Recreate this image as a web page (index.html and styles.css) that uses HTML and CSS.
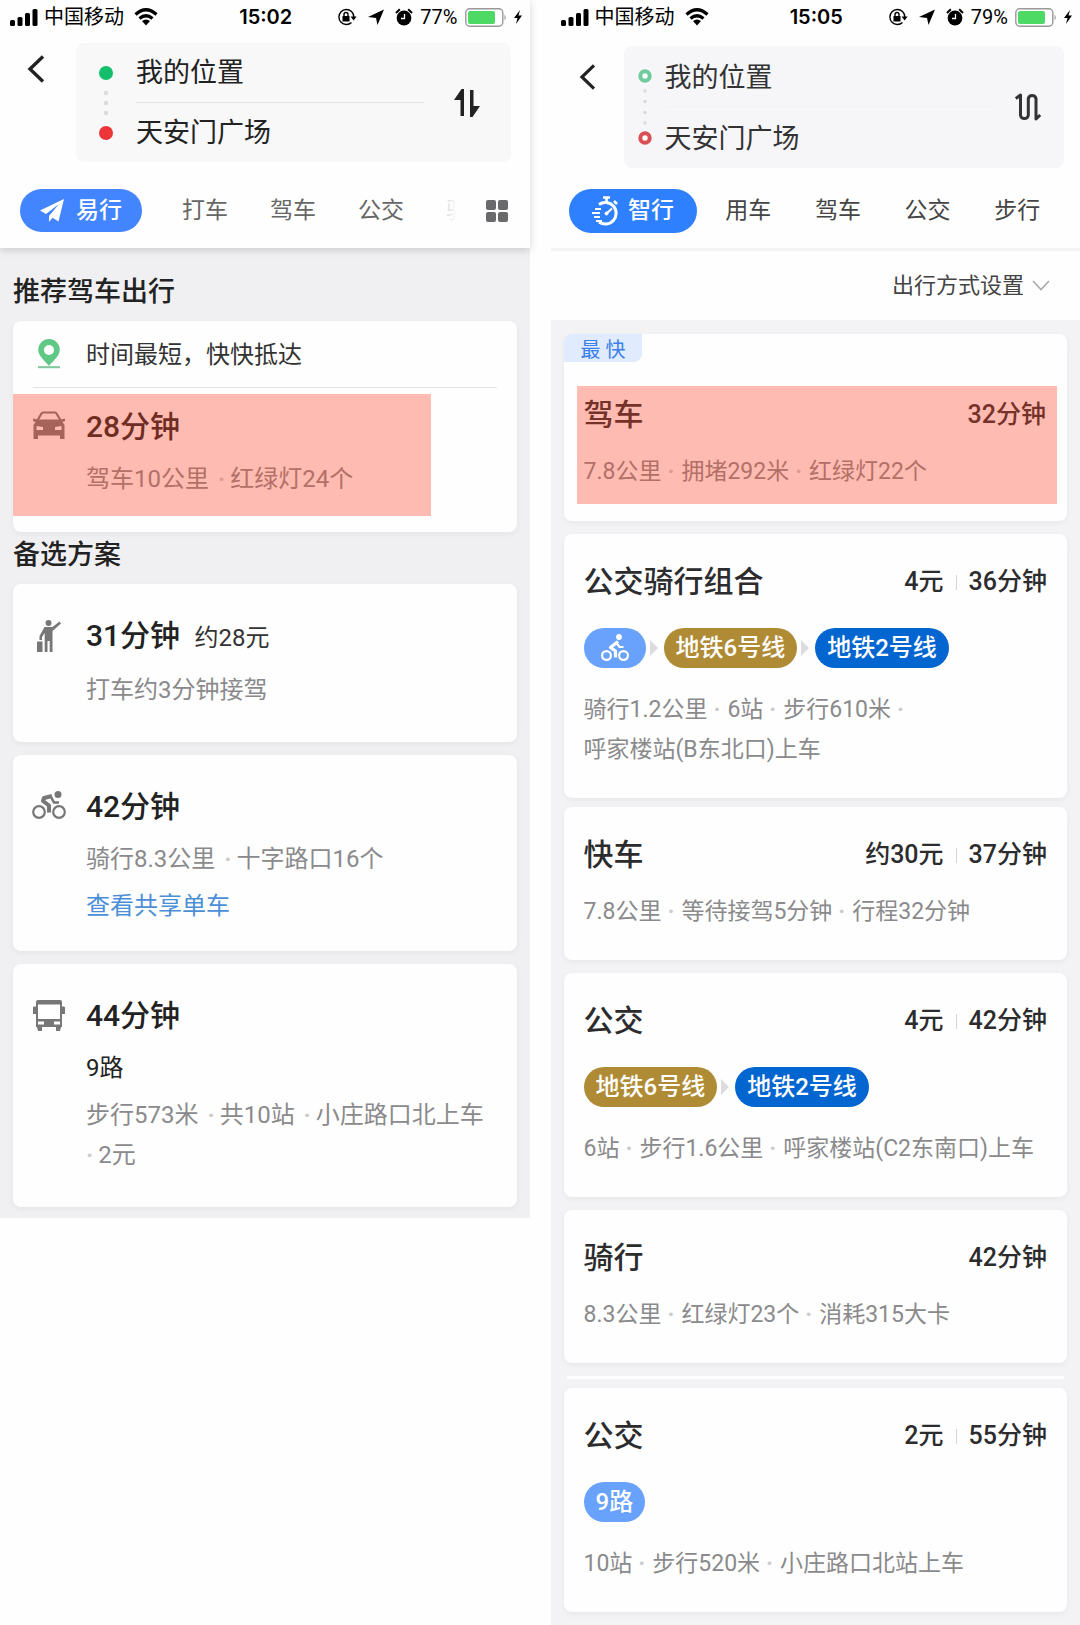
FILE: index.html
```html
<!DOCTYPE html>
<html lang="zh-CN">
<head>
  <meta charset="UTF-8" />
  <meta name="viewport" content="width=device-width, initial-scale=1.0" />
  <title>出行路线</title>
  <link rel="stylesheet" href="styles.css">
</head>
<body>
  <!-- shared icons -->
  <svg class="defs" aria-hidden="true">
    <symbol id="signal" viewBox="0 0 28 18">
      <rect x="0" y="12" width="5" height="6" rx="1.5"/><rect x="7.5" y="9" width="5" height="9" rx="1.5"/>
      <rect x="15" y="5" width="5" height="13" rx="1.5"/><rect x="22.500" y="1" width="5" height="17" rx="1.5"/>
    </symbol>
    <symbol id="wifi" viewBox="0 0 24 18">
      <path d="M1.500 6.500Q12-3 22.500 6.500M5.500 10.500Q12 5 18.500 10.500" fill="none" stroke="#000" stroke-width="3.200"/>
      <path d="M8 13Q12 10 16 13L12 17.500Z"/>
    </symbol>
    <symbol id="lock" viewBox="0 0 20 18">
      <path d="M14.500 3.500A7.500 7.500 0 1 0 14.500 14.500M14.500 3.500A7.500 7.500 0 0 1 16.800 9" fill="none" stroke="#000" stroke-width="1.400"/>
      <path d="M13.600 8.500h6l-3 4zM5.500 8h7v5.500h-7z"/>
      <path d="M7 8V6.500a2 2 0 0 1 4 0V8" fill="none" stroke="#000" stroke-width="1.400"/>
    </symbol>
    <symbol id="locate" viewBox="0 0 16 16"><path d="M16 0.500L9.500 16L8 9L0 8Z"/></symbol>
    <symbol id="alarm" viewBox="0 0 18 18">
      <circle cx="9" cy="10" r="7.400"/>
      <path d="M1 5L4.800 1.300M17 5L13.200 1.300" stroke="#000" stroke-width="2"/>
      <path d="M9.500 6V10.500H6" fill="none" stroke="#fff" stroke-width="1.300"/>
    </symbol>
    <symbol id="battery" viewBox="0 0 42 19">
      <rect x=".8" y=".8" width="37" height="17.400" rx="4" fill="#fff" stroke="#999" stroke-width="1.400"/>
      <rect x="3" y="3" width="27" height="13" rx="2" fill="#4cd964"/>
      <path d="M39.500 6.500Q42 9.500 39.500 12.500Z" fill="#999"/>
    </symbol>
    <symbol id="bolt" viewBox="0 0 8 14"><path d="M6 0L0 8H3.500L2 14L8 5.500H4.500Z"/></symbol>
    <symbol id="back" viewBox="0 0 18 28"><path d="M16 1.500L3 14L16 26.500" fill="none" stroke="#222" stroke-width="3.400"/></symbol>
    <symbol id="rider" viewBox="0 0 28 28">
      <g fill="none" stroke="#fff" stroke-width="2.200">
        <circle cx="5.500" cy="21.500" r="4.400"/><circle cx="22.500" cy="21.500" r="4.400"/>
        <path d="M17 7.500L9.500 13.500L14.500 17V23.500" stroke-width="3.200" stroke-linejoin="round"/>
        <path d="M15.500 9L18.500 13H22.500"/>
      </g>
      <circle cx="18" cy="3" r="2.900" fill="#fff"/>
    </symbol>
  </svg>

  <main class="compare">
    <section class="phone phone-a">
      <header class="top">
        <div class="status">
          <div class="status-left">
            <svg width="28" height="18"><use href="#signal"/></svg>
            <span>中国移动</span>
            <svg class="wifi" width="24" height="18"><use href="#wifi"/></svg>
          </div>
          <time>15:02</time>
          <div class="status-right">
            <svg width="20" height="18"><use href="#lock"/></svg>
            <svg width="16" height="16"><use href="#locate"/></svg>
            <svg width="18" height="18"><use href="#alarm"/></svg>
            <span>77%</span>
            <svg width="42" height="19"><use href="#battery"/></svg>
            <svg width="8" height="14"><use href="#bolt"/></svg>
          </div>
        </div>
        <div class="search">
          <button class="back" type="button" aria-label="返回"><svg width="18" height="28"><use href="#back"/></svg></button>
          <form class="route">
            <svg class="marks" width="14" height="74" viewBox="0 0 14 74">
              <circle cx="7" cy="7" r="7" fill="#13bf6c"/>
              <g fill="#dcdcde"><circle cx="7" cy="27" r="2.300"/><circle cx="7" cy="37" r="2.300"/><circle cx="7" cy="47" r="2.300"/></g>
              <circle cx="7" cy="67" r="7" fill="#eb3539"/>
            </svg>
            <div class="fields">
              <input type="text" aria-label="起点" value="我的位置">
              <input type="text" aria-label="终点" value="天安门广场">
            </div>
            <button class="swap" type="button" aria-label="交换起终点">
              <svg width="26" height="28" viewBox="0 0 26 28"><path d="M7.500 0H10V27H6.500V11H0ZM16 1H19.500V17H26L18.500 28H16Z" fill="#222"/></svg>
            </button>
          </form>
        </div>
        <nav class="tabs">
          <div class="tab-scroll">
            <button class="tab active" type="button">
              <svg width="24" height="23" viewBox="0 0 24 23"><path d="M24 0L0 11.500L6 15L19 5L9 17V23L12.500 18.800L18.500 22.500Z" fill="#fff"/></svg>
              易行
            </button>
            <button class="tab" type="button">打车</button>
            <button class="tab" type="button">驾车</button>
            <button class="tab" type="button">公交</button>
            <button class="tab" type="button">骑行</button>
          </div>
          <button class="more" type="button" aria-label="全部方式">
            <svg width="22" height="22" viewBox="0 0 22 22" fill="#6a696b"><rect width="10" height="10" rx="2"/><rect x="12" width="10" height="10" rx="2"/><rect y="12" width="10" height="10" rx="2"/><rect x="12" y="12" width="10" height="10" rx="2"/></svg>
          </button>
        </nav>
      </header>

      <div class="list">
        <h2>推荐驾车出行</h2>
        <article class="card best">
          <div class="reason">
            <svg width="32" height="30" viewBox="0 0 32 30">
              <path d="M16 0A10.800 10.800 0 0 0 5.200 10.800C5.200 17 12 22 16 27C20 22 26.800 17 26.800 10.800A10.800 10.800 0 0 0 16 0Z" fill="#60c886"/>
              <circle cx="16" cy="11" r="5" fill="#fff"/><path d="M5 28.200H27" stroke="#7ec79a" stroke-width="2"/>
            </svg>
            <span>时间最短，快快抵达</span>
          </div>
          <div class="trip picked">
            <svg width="32" height="30" viewBox="0 0 32 30">
              <path d="M4 10L8.500 2.500Q9 1.500 10 1.500H22Q23 1.500 23.500 2.500L28 10" fill="none" stroke="#777" stroke-width="2.200"/>
              <path d="M0 7.500L4 8.500L28 8.500L32 7.500V10L29.500 11L31.500 14V28H27V24.500H5V28H.5V14L2.500 11L0 10Z" fill="#777"/>
              <path d="M3.500 15L10 16V19H3.500ZM28.500 15L22 16V19H28.500Z" fill="#fff"/>
            </svg>
            <div class="info">
              <h3>28分钟</h3>
              <p><span>驾车10公里</span> <i>·</i>红绿灯24个</p>
            </div>
          </div>
        </article>

        <h2 class="other">备选方案</h2>
        <article class="card trip">
          <svg width="32" height="32" viewBox="0 0 32 32" fill="#777">
            <circle cx="15.500" cy="3" r="3"/>
            <path d="M11.500 7H19.500L26.500 1.500L28 3.500L19.500 11V32H16.700V21H14.500V32H11.700V13L9 17V20H6.500V16Z"/>
            <path d="M4 21.500H9.500V32H4Z"/>
          </svg>
          <div class="info">
            <h3>31分钟 <small>约28元</small></h3>
            <p>打车约3分钟接驾</p>
          </div>
        </article>

        <article class="card trip">
          <svg width="34" height="28" viewBox="0 0 34 28">
            <g fill="none" stroke="#777">
              <circle cx="7" cy="21" r="5.800" stroke-width="2.200"/><circle cx="27" cy="21" r="5.800" stroke-width="2.200"/>
              <path d="M20 5L12 7L11 10L17 14.500V21.500" stroke-width="4" stroke-linejoin="round"/>
              <path d="M19 6L22 11.500H27" stroke-width="2.600"/>
            </g>
            <circle cx="26" cy="3.500" r="3.500" fill="#777"/>
          </svg>
          <div class="info">
            <h3>42分钟</h3>
            <p><span>骑行8.3公里</span> <i>·</i>十字路口16个</p>
            <a class="bikes" href="#">查看共享单车</a>
          </div>
        </article>

        <article class="card trip">
          <svg width="32" height="31" viewBox="0 0 32 31">
            <path d="M5 0H27Q29 0 29 2V27H3V2Q3 0 5 0Z" fill="#777"/>
            <path d="M5 4.500H27V19H5ZM5 21.500H11V24.500H5ZM21 21.500H27V24.500H21Z" fill="#fff"/>
            <path d="M0 7.500Q0 6 3 6.500V14H0ZM32 7.500Q32 6 29 6.500V14H32ZM4 27H9V31H5ZM23 27H28L27 31H23Z" fill="#777"/>
          </svg>
          <div class="info">
            <h3>44分钟</h3>
            <p class="line-name">9路</p>
            <p><span>步行573米</span> <i>·</i><span>共10站</span> <i>·</i>小庄路口北上车<br><i>·</i>2元</p>
          </div>
        </article>
      </div>
    </section>

    <section class="phone phone-b">
      <header class="top">
        <div class="status">
          <div class="status-left">
            <svg width="28" height="18"><use href="#signal"/></svg>
            <span>中国移动</span>
            <svg class="wifi" width="24" height="18"><use href="#wifi"/></svg>
          </div>
          <time>15:05</time>
          <div class="status-right">
            <svg width="20" height="18"><use href="#lock"/></svg>
            <svg width="16" height="16"><use href="#locate"/></svg>
            <svg width="18" height="18"><use href="#alarm"/></svg>
            <span>79%</span>
            <svg width="42" height="19"><use href="#battery"/></svg>
            <svg width="8" height="14"><use href="#bolt"/></svg>
          </div>
        </div>
        <div class="search">
          <button class="back" type="button" aria-label="返回"><svg width="17" height="26"><use href="#back"/></svg></button>
          <form class="route">
            <svg class="marks" width="14" height="76" viewBox="0 0 14 76">
              <circle cx="7" cy="7" r="4.700" fill="#fff" stroke="#6fcb9b" stroke-width="4"/>
              <g fill="#d9d9dd"><circle cx="7" cy="22" r="1.700"/><circle cx="7" cy="32.500" r="1.700"/><circle cx="7" cy="43.500" r="1.700"/><circle cx="7" cy="54" r="1.700"/></g>
              <circle cx="7" cy="69" r="4.700" fill="#fff" stroke="#da4f55" stroke-width="4"/>
            </svg>
            <div class="fields">
              <input type="text" aria-label="起点" value="我的位置">
              <input type="text" aria-label="终点" value="天安门广场">
            </div>
            <button class="swap" type="button" aria-label="交换起终点">
              <svg width="26" height="28" viewBox="0 0 26 28"><path d="M.8 5.500L5.500 2V22.500A4 4 0 0 0 13.300 22.500V5.500A4 4 0 0 1 21 5.500V26L25.200 22" fill="none" stroke="#333" stroke-width="3" stroke-linejoin="round"/></svg>
            </button>
          </form>
        </div>
        <nav class="tabs">
          <button class="tab active" type="button">
            <svg width="29" height="30" viewBox="0 0 29 30" fill="none" stroke="#fff">
              <path d="M8 8.500A10.800 10.800 0 1 1 8 26" stroke-width="3"/>
              <path d="M12 1.500H19M15.500 1.500V6M23 5L26 8" stroke-width="2.600"/>
              <path d="M4 13H10M1 17H9M3 21H9M5 25H11" stroke-width="1.800"/>
              <path d="M15 18L21 12.500" stroke-width="2"/><circle cx="15.500" cy="17.500" r="1.500" fill="#fff"/>
            </svg>
            智行
          </button>
          <button class="tab" type="button">用车</button>
          <button class="tab" type="button">驾车</button>
          <button class="tab" type="button">公交</button>
          <button class="tab" type="button">步行</button>
        </nav>
      </header>

      <div class="filter">
        <button type="button">出行方式设置
          <svg width="18" height="11" viewBox="0 0 18 11"><path d="M1 1L9 9.500L17 1" fill="none" stroke="#aaa" stroke-width="1.600"/></svg>
        </button>
      </div>

      <div class="list">
        <article class="card fastest">
          <span class="badge">最 快</span>
          <div class="picked">
            <div class="head"><h3>驾车</h3><span>32分钟</span></div>
            <p>7.8公里<i>·</i>拥堵292米<i>·</i>红绿灯22个</p>
          </div>
        </article>

        <article class="card">
          <div class="head"><h3>公交骑行组合</h3><span class="price">4元</span><span>36分钟</span></div>
          <div class="lines">
            <span class="line bike"><svg width="28" height="28"><use href="#rider"/></svg></span>
            <span class="line metro6">地铁6号线</span>
            <span class="line metro2">地铁2号线</span>
          </div>
          <p>骑行1.2公里<i>·</i>6站<i>·</i>步行610米<i>·</i><br>呼家楼站(B东北口)上车</p>
        </article>

        <article class="card joined">
          <div class="head"><h3>快车</h3><span class="price">约30元</span><span>37分钟</span></div>
          <p>7.8公里<i>·</i>等待接驾5分钟<i>·</i>行程32分钟</p>
        </article>

        <article class="card">
          <div class="head"><h3>公交</h3><span class="price">4元</span><span>42分钟</span></div>
          <div class="lines">
            <span class="line metro6">地铁6号线</span>
            <span class="line metro2">地铁2号线</span>
          </div>
          <p>6站<i>·</i>步行1.6公里<i>·</i>呼家楼站(C2东南口)上车</p>
        </article>

        <article class="card">
          <div class="head"><h3>骑行</h3><span>42分钟</span></div>
          <p>8.3公里<i>·</i>红绿灯23个<i>·</i>消耗315大卡</p>
        </article>

        <hr class="rule">

        <article class="card joined">
          <div class="head"><h3>公交</h3><span class="price">2元</span><span>55分钟</span></div>
          <div class="lines"><span class="line bus">9路</span></div>
          <p>10站<i>·</i>步行520米<i>·</i>小庄路口北站上车</p>
        </article>
      </div>
    </section>
  </main>
</body>
</html>
```
FILE: styles.css
```css
* {
  box-sizing: border-box;
}
body {
  margin: 0;
  background: #fefefe;
  color: #222;
  font-family: Roboto, "Noto Sans CJK SC", sans-serif;
}
h2, h3, p {
  margin: 0;
  font-weight: 500;
}
button, input {
  font: inherit;
  color: inherit;
  background: none;
  border: none;
  padding: 0;
}
button {
  cursor: pointer;
}
svg {
  flex: none;
}
.defs {
  display: none;
}
.compare {
  display: flex;
  align-items: flex-start;
  gap: 21px;
}
.phone {
  flex: 1;
  min-width: 0;
}

/* status bar */
.status {
  display: grid;
  grid-template-columns: 1fr auto 1fr;
  align-items: center;
  height: 34px;
  padding: 0 8px 0 10px;
  font-size: 20px;
  line-height: 34px;
  color: #000;
}
.status time {
  font-family: Inter, sans-serif;
  font-weight: 600;
}
.status-left, .status-right {
  display: flex;
  align-items: center;
  gap: 7px;
}
.status-left {
  gap: 6px;
}
.status-right {
  justify-content: flex-end;
}
.status-right svg:nth-child(-n+2) {
  margin-right: 4px;
}
.wifi {
  margin-left: 4px;
}

/* header */
.top {
  position: relative;
  background: #fefefe;
}
.search {
  display: flex;
  align-items: flex-start;
}
.back {
  display: flex;
  align-items: center;
}
.route {
  flex: 1;
  display: flex;
  align-items: center;
  border-radius: 8px;
  font-size: 27px;
}
.fields {
  flex: 1;
  min-width: 0;
}
.fields input {
  display: block;
  width: 100%;
  height: 60px;
  padding-bottom: 4px;
}
.fields input:first-child {
  border-bottom: 1px solid #e4e4e6;
}
.swap {
  display: flex;
  justify-content: center;
}
.tabs {
  display: flex;
  font-size: 23px;
  line-height: 40px;
}
.tab.active {
  display: flex;
  align-items: center;
  justify-content: center;
  border-radius: 22px;
  color: #fff;
  font-weight: 500;
}

.phone-a .top {
  box-shadow: 0 2px 8px rgba(0, 0, 0, .16);
}
.phone-a .search {
  padding: 9px 19px 0 0;
}
.phone-a .back {
  width: 76px;
  height: 52px;
  padding-left: 27px;
}
.phone-a .route {
  background: #f8f8f9;
}
.phone-a .marks {
  margin: 0 23px 0 23px;
}
.phone-a .fields input:last-child {
  height: 59px;
}
.phone-a .swap {
  width: 87px;
}
.phone-a .tabs {
  padding: 27px 0 16px 20px;
  color: #666;
}
.tab-scroll {
  position: relative;
  flex: 1;
  min-width: 0;
  display: flex;
  overflow: hidden;
}
.tab-scroll::after {
  content: "";
  position: absolute;
  top: 0;
  right: 0;
  width: 32px;
  height: 100%;
  background: linear-gradient(to right, rgba(254, 254, 254, .3), #fefefe);
}
.phone-a .tab {
  flex: none;
  width: 88px;
}
.phone-a .tab.active {
  width: 122px;
  height: 43px;
  margin-right: 19px;
  gap: 12px;
  background: #4385ff;
}
.more {
  display: flex;
  align-items: center;
  justify-content: center;
  width: 73px;
  padding-left: 8px;
}

.phone-b .search {
  padding: 12px 16px 0 0;
}
.phone-b .back {
  width: 73px;
  height: 62px;
  padding-left: 28px;
}
.phone-b .route {
  background: #f6f6f9;
  color: #333;
}
.phone-b .marks {
  margin: 0 13px 0 14px;
}
.phone-b .fields input {
  height: 61px;
  padding-bottom: 2px;
}
.phone-b .fields input:first-child {
  border-color: #f2f1f5;
}
.phone-b .swap {
  width: 72px;
}
.phone-b .tabs {
  padding: 21px 18px 15px 18px;
  color: #444;
}
.phone-b .tab {
  flex: 1;
}
.phone-b .tab.active {
  flex: none;
  width: 128px;
  height: 44px;
  margin-right: 7px;
  gap: 8px;
  background: #2f80fe;
}
.filter {
  display: flex;
  justify-content: flex-end;
  height: 72px;
  padding-right: 30px;
  border-top: 3px solid #f3f2f5;
  color: #444;
  font-size: 22px;
  line-height: 40px;
}
.filter button {
  display: flex;
  align-items: center;
  gap: 8px;
}

/* result cards */
.card {
  margin-bottom: 13px;
  border-radius: 8px;
  background: #fefefe;
  box-shadow: 0 2px 6px rgba(0, 0, 0, .05);
}
.card h3 {
  font-size: 30px;
  line-height: 40px;
}
.card p {
  line-height: 40px;
  font-weight: 400;
  color: #8a8a8c;
}
.card i {
  font-style: normal;
  font-weight: 700;
  color: #ccc;
}
.picked {
  position: relative;
}
.picked::after {
  content: "";
  position: absolute;
  inset: 0;
  background: rgba(255, 63, 35, .35);
}

.phone-a .list {
  display: flow-root;
  padding: 24px 13px 0;
  background: #f0eff1;
}
.phone-a .card:last-child {
  margin-bottom: 11px;
}
.phone-a h2 {
  margin-bottom: 9px;
  font-size: 27px;
  line-height: 40px;
}
.phone-a .other {
  margin-top: 3px;
}
.phone-a .best {
  margin: 0;
  padding-bottom: 16px;
}
.reason {
  display: flex;
  align-items: center;
  gap: 21px;
  height: 67px;
  margin: 0 20px 6px;
  border-bottom: 1px solid #e4e4e6;
  color: #333;
  font-size: 24px;
}
.reason span {
  padding-bottom: 4px;
}
.trip {
  display: flex;
  align-items: flex-start;
  padding: 32px 20px;
}
.trip > svg {
  width: 34px;
  margin: 4px 20px 0 -1px;
}
.trip.picked {
  width: 83%;
  padding: 13px 20px 17px;
}
.info {
  flex: 1;
  min-width: 0;
}
.info h3 {
  margin-bottom: 12px;
}
.info small {
  margin-left: 7px;
  font-size: 24px;
  font-weight: 400;
  color: #333;
}
.info p {
  font-size: 24px;
}
.info p span {
  margin-right: 3px;
}
.info i {
  margin-right: 5px;
}
.info .line-name {
  margin-bottom: 7px;
  color: #222;
}
.bikes {
  display: block;
  margin-top: 14px;
  font-size: 24px;
  line-height: 26px;
  color: #4a8fd8;
  text-decoration: none;
}

.phone-b .list {
  display: flow-root;
  padding: 14px 13px 0;
  background: #f3f2f5;
}
.phone-b .card {
  padding: 28px 20px;
  color: #2c2c2e;
}
.phone-b .joined {
  margin-top: -4px;
}
.phone-b .card.fastest {
  display: flex;
  flex-direction: column;
  padding: 0 10px 17px 13px;
}
.fastest .picked {
  padding: 9px 11px 12px 7px;
}
.badge {
  align-self: flex-start;
  height: 28px;
  margin: 0 0 24px -13px;
  padding: 0 17px;
  border-radius: 8px 0 8px 0;
  background: #e0ecfd;
  color: #3b80e8;
  font-size: 20px;
  line-height: 32px;
}
.head {
  display: flex;
  align-items: center;
  margin-bottom: 17px;
  font-size: 25px;
  font-weight: 500;
  line-height: 40px;
}
.head h3 {
  flex: 1;
}
.price::after {
  content: "";
  display: inline-block;
  width: 1px;
  height: 15px;
  margin: 0 12px;
  background: #d5d5d8;
}
.phone-b p {
  font-size: 23px;
}
.phone-b i {
  margin: 0 7px 0 6px;
}
.lines {
  display: flex;
  gap: 18px;
  margin: 26px 0 22px;
}
.line {
  position: relative;
  display: flex;
  align-items: center;
  height: 40px;
  padding: 0 12px;
  border-radius: 20px;
  color: #fff;
  font-size: 24px;
  font-weight: 500;
  line-height: 40px;
}
.line + .line::before {
  content: "";
  position: absolute;
  top: 12px;
  left: -14px;
  border: 8px solid transparent;
  border-left-color: #dcdce0;
  border-right: none;
}
.bike {
  padding: 0 17px;
  background: #68a2fc;
}
.bus {
  background: #68a2fc;
}
.metro6 {
  background: #b08b35;
}
.metro2 {
  background: #0265d0;
}
.rule {
  height: 3px;
  margin: 0 3px 13px;
  border: none;
  background: #fefefe;
}
```
